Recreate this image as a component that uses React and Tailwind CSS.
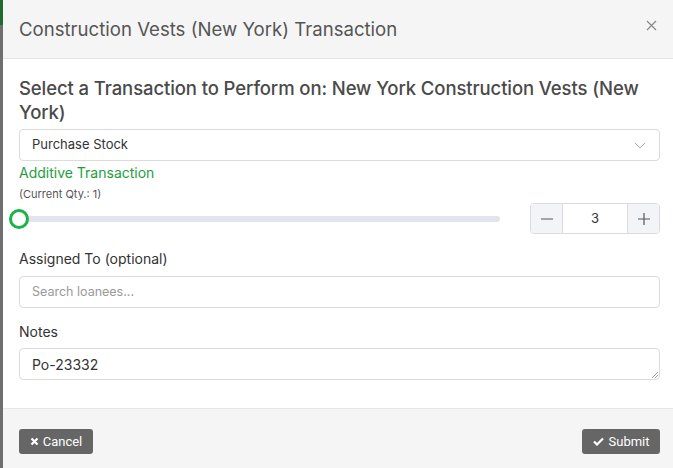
import React from 'react';

const App = () => {
  return (
    <div className="flex h-[468px] w-[673px] overflow-hidden bg-white font-['Inter','Liberation_Sans',sans-serif]">
      {/* backdrop strip */}
      <div className="flex w-[3px] flex-col bg-[#6f6f6f]">
        <div className="h-[25px] bg-[#1f6b2e]" />
      </div>

      <div className="flex flex-1 flex-col">
        {/* Header */}
        <div className="flex h-[59px] items-center justify-between border-b border-[#e6e6e6] bg-[#f5f5f5] pl-4 pr-[13px]">
          <h2 className="text-[18.6px] leading-6 text-[#555]">Construction Vests (New York) Transaction</h2>
          <svg width="11" height="11" viewBox="0 0 11 11" className="mb-2 mr-[3px] text-[#888]">
            <path d="M1 1L10 10M10 1L1 10" stroke="currentColor" strokeWidth="1.2" />
          </svg>
        </div>

        {/* Body */}
        <div className="flex-1 pl-4 pr-[13px] pt-[17px]">
          <h3 className="text-[18.5px] font-medium leading-6 tracking-[-0.1px] text-[#4a4a4a]">
            Select a Transaction to Perform on: New York Construction Vests (New York)
          </h3>

          <div className="mt-[5px] flex h-[32px] items-center justify-between rounded border border-[#d9dbe0] pl-3 pr-[13px]">
            <span className="text-[13px] text-[#333]">Purchase Stock</span>
            <svg width="12" height="7" viewBox="0 0 12 7" className="text-[#aaa]">
              <path d="M1 1L6 6L11 1" fill="none" stroke="currentColor" strokeWidth="1" />
            </svg>
          </div>

          <div className="mt-[2px] text-[14px] leading-5 text-[#1e9e3d]">Additive Transaction</div>
          <div className="mt-[3px] text-[11px] leading-4 text-[#555]">(Current Qty.: 1)</div>

          <div className="mt-[1px] flex items-center justify-between">
            <div className="relative ml-[-1px] h-[30px] w-[482px]">
              <div className="absolute left-0 right-0 top-[12px] h-[6px] rounded-full bg-[#e1e4ea]" />
              <div className="absolute left-[-9px] top-[5px] h-[20px] w-[20px] rounded-full border-[3px] border-[#19b347] bg-white" />
            </div>
            <div className="flex h-[31px] w-[130px] overflow-hidden rounded border border-[#d9dbe0]">
              <div className="flex w-[32px] items-center justify-center border-r border-[#d9dbe0] bg-[#f3f4f7]">
                <svg width="12" height="2" viewBox="0 0 12 2"><path d="M0 1H12" stroke="#555" strokeWidth="1.2" /></svg>
              </div>
              <div className="flex flex-1 items-center justify-center text-[13px] text-[#333]">3</div>
              <div className="flex w-[32px] items-center justify-center border-l border-[#d9dbe0] bg-[#f3f4f7]">
                <svg width="12" height="12" viewBox="0 0 12 12"><path d="M0 6H12M6 0V12" stroke="#555" strokeWidth="1.2" /></svg>
              </div>
            </div>
          </div>

          <div className="mt-[15px] text-[14px] leading-5 text-[#333]">Assigned To (optional)</div>
          <div className="mt-[7px] flex h-[32px] items-center rounded border border-[#d9dbe0] px-3">
            <span className="text-[12.5px] text-[#999]">Search loanees...</span>
          </div>

          <div className="mt-[14px] text-[14px] leading-5 text-[#333]">Notes</div>
          <div className="relative mt-[6px] flex h-[32px] items-center rounded border border-[#d9dbe0] px-3">
            <span className="text-[14px] text-[#333]">Po-23332</span>
            <svg width="7" height="7" viewBox="0 0 7 7" className="absolute bottom-[1px] right-[1px]">
              <path d="M1 7L7 1M4 7L7 4" stroke="#888" strokeWidth="0.8" />
            </svg>
          </div>
        </div>

        {/* Footer */}
        <div className="flex h-[60px] items-center justify-between border-t border-[#e6e6e6] bg-[#f5f5f5] pl-4 pr-[13px] pt-[6px]">
          <button className="flex h-[25px] w-[74px] items-center justify-center gap-[4px] rounded-[3px] bg-[#666] text-[13px] text-white font-['Roboto','Liberation_Sans',sans-serif]">
            <svg width="9" height="9" viewBox="0 0 9 9"><path d="M1.5 1.5L7.5 7.5M7.5 1.5L1.5 7.5" stroke="white" strokeWidth="2.2" /></svg>
            Cancel
          </button>
          <button className="flex h-[25px] w-[78px] items-center justify-center gap-[5px] rounded-[3px] bg-[#666] text-[13px] text-white font-['Roboto','Liberation_Sans',sans-serif]">
            <svg width="11" height="9" viewBox="0 0 11 9"><path d="M1 4.5L4 7.5L10 1.5" fill="none" stroke="white" strokeWidth="2.2" /></svg>
            Submit
          </button>
        </div>
      </div>
    </div>
  );
};

export default App;
